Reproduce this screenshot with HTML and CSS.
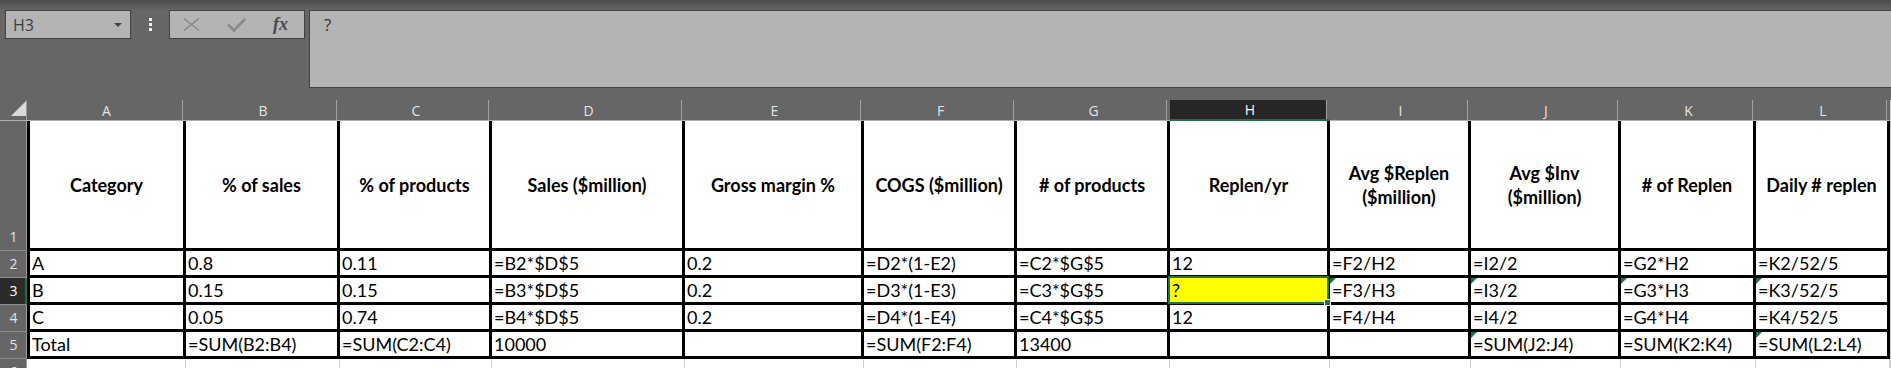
FILE: index.html
```html
<!DOCTYPE html>
<html lang="en">
<head>
    <meta charset="UTF-8">
    <meta name="viewport" content="width=device-width, initial-scale=1.0">
    <title>Replenishment Sheet</title>
    <link rel="stylesheet" href="styles.css">
</head>
<body>
    <div class="toolbar">
        <div class="name-box">
            <span>H3</span>
            <span class="arrow"></span>
        </div>
        <div class="grip"><i></i><i></i><i></i></div>
        <div class="fx-buttons">
            <svg width="17" height="13" viewBox="0 0 17 13">
                <path d="M1 0.5 L16 12.5 M16 0.5 L1 12.5" stroke="#8a8a8a" stroke-width="1.6" fill="none" />
            </svg>
            <svg width="19" height="14" viewBox="0 0 19 14">
                <path d="M1 6.5 L7 12.5 L18 1" stroke="#8a8a8a" stroke-width="2.6" fill="none" />
            </svg>
            <span class="fx">fx</span>
        </div>
        <div class="formula-bar">?</div>
    </div>

    <div class="sheet">
        <!-- column letters -->
        <div class="corner"><span class="tri"></span></div>
        <div class="col-head">A</div>
        <div class="col-head">B</div>
        <div class="col-head">C</div>
        <div class="col-head">D</div>
        <div class="col-head">E</div>
        <div class="col-head">F</div>
        <div class="col-head">G</div>
        <div class="col-head active">H</div>
        <div class="col-head">I</div>
        <div class="col-head">J</div>
        <div class="col-head">K</div>
        <div class="col-head">L</div>
        <div class="col-head end"></div>

        <!-- row 1 -->
        <div class="row-head">1</div>
        <div class="cell head first">Category</div>
        <div class="cell head">% of sales</div>
        <div class="cell head">% of products</div>
        <div class="cell head">Sales ($million)</div>
        <div class="cell head">Gross margin %</div>
        <div class="cell head">COGS ($million)</div>
        <div class="cell head"># of products</div>
        <div class="cell head">Replen/yr</div>
        <div class="cell head">Avg $Replen<br>($million)</div>
        <div class="cell head">Avg $Inv<br>($million)</div>
        <div class="cell head"># of Replen</div>
        <div class="cell head">Daily # replen</div>
        <div class="end"></div>

        <!-- row 2 -->
        <div class="row-head">2</div>
        <div class="cell first">A</div>
        <div class="cell">0.8</div>
        <div class="cell">0.11</div>
        <div class="cell">=B2*$D$5</div>
        <div class="cell">0.2</div>
        <div class="cell">=D2*(1-E2)</div>
        <div class="cell">=C2*$G$5</div>
        <div class="cell">12</div>
        <div class="cell">=F2/H2</div>
        <div class="cell">=I2/2</div>
        <div class="cell">=G2*H2</div>
        <div class="cell">=K2/52/5</div>
        <div class="end"></div>

        <!-- row 3 -->
        <div class="row-head active">3</div>
        <div class="cell first">B</div>
        <div class="cell">0.15</div>
        <div class="cell">0.15</div>
        <div class="cell">=B3*$D$5</div>
        <div class="cell">0.2</div>
        <div class="cell">=D3*(1-E3)</div>
        <div class="cell">=C3*$G$5</div>
        <div class="cell selected">?</div>
        <div class="cell flag">=F3/H3</div>
        <div class="cell flag">=I3/2</div>
        <div class="cell flag">=G3*H3</div>
        <div class="cell flag">=K3/52/5</div>
        <div class="end"></div>

        <!-- row 4 -->
        <div class="row-head">4</div>
        <div class="cell first">C</div>
        <div class="cell">0.05</div>
        <div class="cell">0.74</div>
        <div class="cell">=B4*$D$5</div>
        <div class="cell">0.2</div>
        <div class="cell">=D4*(1-E4)</div>
        <div class="cell">=C4*$G$5</div>
        <div class="cell">12</div>
        <div class="cell">=F4/H4</div>
        <div class="cell">=I4/2</div>
        <div class="cell">=G4*H4</div>
        <div class="cell">=K4/52/5</div>
        <div class="end"></div>

        <!-- row 5 -->
        <div class="row-head">5</div>
        <div class="cell first">Total</div>
        <div class="cell">=SUM(B2:B4)</div>
        <div class="cell">=SUM(C2:C4)</div>
        <div class="cell">10000</div>
        <div class="cell"></div>
        <div class="cell">=SUM(F2:F4)</div>
        <div class="cell">13400</div>
        <div class="cell"></div>
        <div class="cell"></div>
        <div class="cell flag">=SUM(J2:J4)</div>
        <div class="cell">=SUM(K2:K4)</div>
        <div class="cell flag">=SUM(L2:L4)</div>
        <div class="end"></div>

        <!-- row 6 (cut off) -->
        <div class="row-head">6</div>
        <div class="cell blank"></div>
        <div class="cell blank"></div>
        <div class="cell blank"></div>
        <div class="cell blank"></div>
        <div class="cell blank"></div>
        <div class="cell blank"></div>
        <div class="cell blank"></div>
        <div class="cell blank"></div>
        <div class="cell blank"></div>
        <div class="cell blank"></div>
        <div class="cell blank"></div>
        <div class="cell blank"></div>
        <div class="end"></div>
    </div>
</body>
</html>
```

FILE: styles.css
```css
body {
    margin: 0;
    height: 368px;
    overflow: hidden;
    background: #666;
    font-family: Lato, "Liberation Sans", sans-serif;
}

/* top bar: name box, buttons, formula bar */
.toolbar {
    display: flex;
    align-items: flex-start;
    height: 100px;
    box-sizing: border-box;
    padding: 10px 0 0 5px;
    background: linear-gradient(#4b4b4b, #626262 9px, #666 10px);
}
.name-box {
    width: 126px;
    height: 29px;
    box-sizing: border-box;
    display: flex;
    align-items: center;
    justify-content: space-between;
    padding: 0 8px 0 7px;
    border: 1px solid #434343;
    background: #b4b4b4;
    font: 16px "Open Sans", sans-serif;
    color: #3e3e3e;
}
.name-box .arrow {
    border-left: 4px solid transparent;
    border-right: 4px solid transparent;
    border-top: 4px solid #444;
}
.grip {
    display: flex;
    flex-direction: column;
    gap: 2px;
    margin: 8px 17px 0 18px;
}
.grip i {
    width: 3px;
    height: 3px;
    background: #f0f0f0;
}
.fx-buttons {
    width: 136px;
    height: 29px;
    box-sizing: border-box;
    display: flex;
    align-items: center;
    gap: 27px;
    padding-left: 13px;
    border: 1px solid #434343;
    background: #b4b4b4;
}
.fx {
    font: italic bold 18px "Liberation Serif", serif;
    color: #4a4a4a;
}
.formula-bar {
    flex: 1;
    height: 78px;
    box-sizing: border-box;
    margin-left: 4px;
    padding: 4px 14px;
    border: 1px solid #434343;
    border-right: none;
    background: #b4b4b4;
    font: 17px/20px "Open Sans", sans-serif;
    color: #333;
}

/* sheet grid */
.sheet {
    display: grid;
    grid-template-columns: 27px 159px 154px 152px 193px 179px 153px 153px 160px 141px 150px 135px 134px 1fr;
    grid-template-rows: 21px 130px repeat(5, 27px);
}
.corner {
    display: flex;
    align-items: flex-end;
    justify-content: flex-end;
    padding: 0 1px 4px 0;
    box-shadow: inset -1px 0 #9c9c9c;
    border-bottom: 1px solid #b0b0b0;
}
.corner .tri {
    width: 0;
    height: 0;
    border-left: 15px solid transparent;
    border-bottom: 15px solid #dadada;
}
.col-head {
    display: flex;
    align-items: center;
    justify-content: center;
    border-bottom: 1px solid #b0b0b0;
    box-shadow: inset -3px 0 #666, inset -4px 0 #a0a0a0;
    font: 14px "Open Sans", sans-serif;
    color: #e4e4e4;
}
.col-head.active {
    background: #262626;
    border-bottom: 2px solid #217346;
    color: #fff;
}
.col-head.end {
    box-shadow: none;
}
.row-head {
    display: flex;
    align-items: flex-end;
    justify-content: center;
    padding-bottom: 3px;
    border-bottom: 1px solid #8e8e8e;
    box-shadow: inset -1px 0 #9c9c9c;
    font: 14px/20px "Open Sans", sans-serif;
    color: #e4e4e4;
}
.row-head.active {
    background: #2b2b2b;
    box-shadow: inset -2px 0 #217346;
    color: #fff;
}
.end {
    background: #d0d0d0;
}

.cell {
    position: relative;
    padding: 0 2px;
    background: #fff;
    border-right: 3px solid #000;
    border-bottom: 3px solid #000;
    font-size: 18px;
    line-height: 24px;
    white-space: nowrap;
    color: #000;
}
.cell.first {
    border-left: 3px solid #000;
}
.cell.head {
    display: flex;
    align-items: center;
    justify-content: center;
    text-align: center;
    font-weight: bold;
    white-space: normal;
}
.cell.blank {
    border-left: none;
    border-bottom: none;
    border-right: 1px solid #d4d4d4;
}
.cell.blank:first-of-type {
    border-left: 3px solid transparent;
}

/* selected cell H3 */
.cell.selected {
    z-index: 1;
    background: #ffff00;
}
.cell.selected::after {
    content: "";
    position: absolute;
    top: -2px;
    left: -2px;
    right: -2px;
    bottom: -2px;
    border: 2px solid #217346;
}
.cell.selected::before {
    content: "";
    position: absolute;
    right: -4px;
    bottom: -4px;
    width: 5px;
    height: 5px;
    z-index: 2;
    background: #217346;
    border: 1px solid #fff;
}

/* green error triangle */
.cell.flag::before {
    content: "";
    position: absolute;
    top: 0;
    left: 0;
    border-top: 6px solid #217346;
    border-right: 6px solid transparent;
}
```
